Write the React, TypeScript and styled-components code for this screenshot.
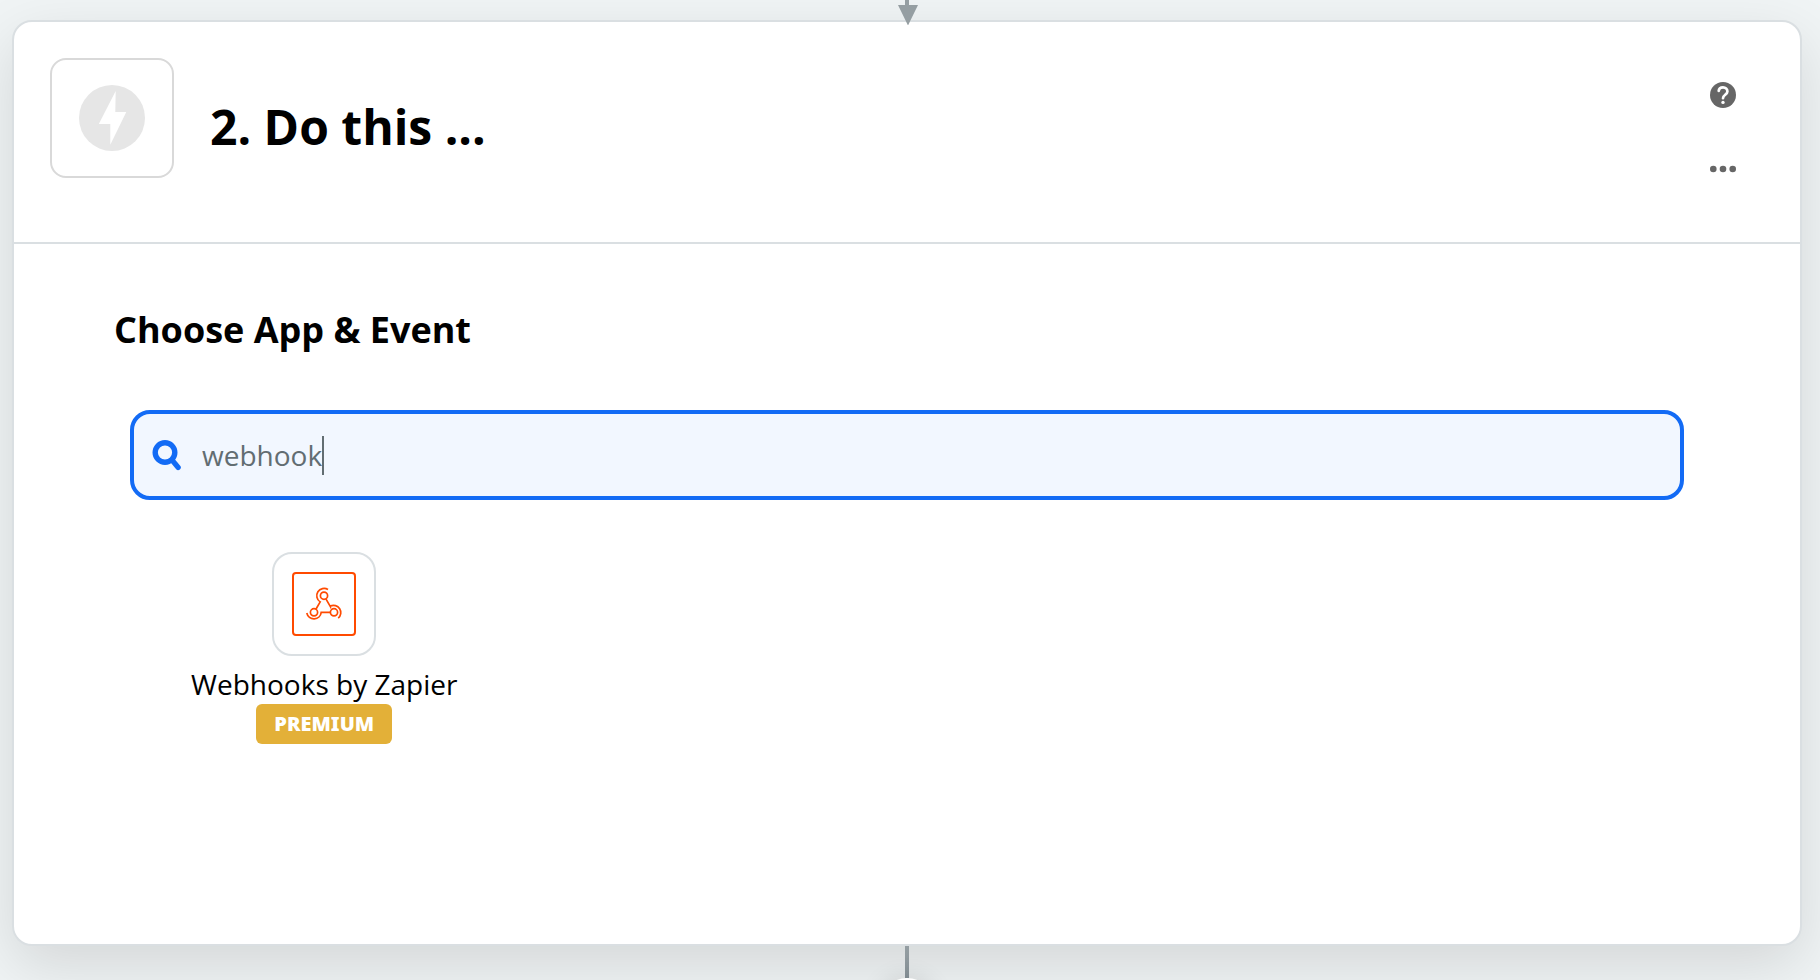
import React, { useState } from "react";
import styled, { createGlobalStyle } from "styled-components";

const GlobalStyle = createGlobalStyle`
  *, *::before, *::after { box-sizing: border-box; }
  body {
    margin: 0;
    background: #f0f4f5;
    color: #000;
    font-family: "Open Sans", "Noto Sans", sans-serif;
  }
`;

const Canvas = styled.main`
  display: flex;
  flex-direction: column;
  height: 100vh;
  overflow: hidden;
  padding: 0 18px 0 12px;
`;

const Connector = styled.div<{ $height: number; $above?: boolean }>`
  position: relative;
  z-index: ${(p) => (p.$above ? 1 : 0)};
  display: flex;
  flex: none;
  flex-direction: column;
  align-items: center;
  height: ${(p) => p.$height}px;
`;

const ArrowDown = styled.svg`
  display: block;
  flex: none;
  width: 22px;
  height: 25px;
`;

const Line = styled.div`
  flex: none;
  width: 4px;
  height: 32px;
  background: linear-gradient(#959ea2, #869197);
`;

const AddStep = styled.button`
  flex: none;
  width: 56px;
  height: 56px;
  padding: 0;
  border: 0;
  border-radius: 50%;
  background: #fff;
  box-shadow: 0 0 24px rgba(0, 0, 0, 0.12);
`;

const Card = styled.section`
  flex: none;
  border: 2px solid #dadfe2;
  border-radius: 20px;
  background: #fff;
  box-shadow: 0 20px 60px rgba(0, 0, 0, 0.12);
`;

const Header = styled.header`
  display: flex;
  align-items: flex-start;
  gap: 36px;
  min-height: 222px;
  padding: 36px 53px 36px 36px;
  border-bottom: 2px solid #dadfe2;
`;

const StepIcon = styled.div`
  display: flex;
  flex: none;
  align-items: center;
  justify-content: center;
  width: 124px;
  height: 120px;
  border: 2px solid #d9d9d9;
  border-radius: 16px;
`;

const Title = styled.h1`
  flex: 1;
  margin: 0;
  padding-top: 33px;
  font-size: 48px;
  font-weight: 700;
  line-height: 72px;
`;

const Actions = styled.div`
  display: flex;
  flex-direction: column;
  gap: 26px;
  padding-top: 13px;
`;

const IconButton = styled.button`
  display: flex;
  align-items: center;
  justify-content: center;
  width: 48px;
  height: 48px;
  padding: 0;
  border: 0;
  background: none;
  color: #666;
  cursor: pointer;
`;

const Body = styled.div`
  padding: 62px 100px 200px;
`;

const Heading = styled.h2`
  margin: 0 0 56px;
  font-size: 36px;
  font-weight: 700;
  line-height: 48px;
`;

const Picker = styled.div`
  padding: 0 16px;
`;

const SearchBox = styled.label`
  display: flex;
  align-items: center;
  height: 90px;
  padding: 0 16px;
  border: 4px solid #136bf5;
  border-radius: 20px;
  background: #f2f7ff;
  cursor: text;
`;

const SearchIcon = styled.svg`
  flex: none;
  width: 34px;
  height: 34px;
  margin-right: 18px;
`;

const SearchInput = styled.input`
  field-sizing: content;
  max-width: 100%;
  height: 40px;
  padding: 0;
  border: 0;
  outline: 0;
  background: none;
  color: #626d72;
  caret-color: transparent;
  font: 400 28px/40px "Open Sans", "Noto Sans", sans-serif;
`;

const Caret = styled.span`
  flex: none;
  width: 2px;
  height: 39px;
  background: #626d72;
`;

const AppGrid = styled.div`
  display: grid;
  grid-template-columns: repeat(4, 1fr);
  margin-top: 52px;
`;

const AppTile = styled.button`
  display: flex;
  flex-direction: column;
  align-items: center;
  padding: 0;
  border: 0;
  background: none;
  color: #000;
  font-family: inherit;
  cursor: pointer;
`;

const AppLogo = styled.span`
  display: flex;
  align-items: center;
  justify-content: center;
  width: 104px;
  height: 104px;
  border: 2px solid #dadfe2;
  border-radius: 20px;
`;

const AppName = styled.span`
  margin-top: 8px;
  font-size: 28px;
  line-height: 40px;
`;

const Badge = styled.span`
  padding: 0 18px;
  border-radius: 6px;
  background: #e3b038;
  color: #fff;
  font-family: "Noto Sans", "Open Sans", sans-serif;
  font-size: 20px;
  font-weight: 900;
  line-height: 40px;
`;

function BoltIcon() {
  return (
    <svg width="66" height="66" viewBox="-33 -33 66 66" aria-hidden="true">
      <circle r="33" fill="#e6e6e6" />
      <path d="M3.7-27 3.3-6H14.3L-1.7 26.8V6H-13.2Z" fill="#fff" />
    </svg>
  );
}

function HelpIcon() {
  return (
    <svg width="26" height="26" viewBox="-13 -13 26 26" aria-hidden="true">
      <circle r="13" fill="currentColor" />
      <path
        d="M-4.3-4.1C-4.1-6.3-2.2-7.7 0-7.7 2.5-7.7 4.4-6 4.4-3.6 4.4-.4 0-.1 0 3.2"
        fill="none"
        stroke="#fff"
        strokeWidth="2.7"
        strokeLinecap="round"
      />
      <circle cy="7.4" r="1.7" fill="#fff" />
    </svg>
  );
}

function MoreIcon() {
  return (
    <svg width="26" height="8" viewBox="-13 -4 26 8" fill="currentColor" aria-hidden="true">
      <circle cx="-9.7" r="3.3" />
      <circle r="3.3" />
      <circle cx="9.7" r="3.3" />
    </svg>
  );
}

function WebhookLogo() {
  return (
    <svg width="64" height="64" viewBox="0 0 64 64" fill="none" stroke="#ff4a00" aria-hidden="true">
      <rect x="1" y="1" width="62" height="62" rx="3" strokeWidth="2" />
      <g strokeWidth="1.7">
        <circle cx="32" cy="23.7" r="3.6" />
        <circle cx="22" cy="40.3" r="3.6" />
        <circle cx="42" cy="40.3" r="3.6" />
        <path d="M36 17.5A7.3 7.3 0 1 0 28.2 29.9L23.9 37.2" />
        <path d="M33.9 26.9 38.4 34.6 38.4 34A7.3 7.3 0 0 1 46.2 46.2" />
        <path d="M38.4 40.3H29.2A7.3 7.3 0 0 1 14.8 41" />
      </g>
    </svg>
  );
}

export default function App() {
  const [query, setQuery] = useState("webhook");

  return (
    <>
      <GlobalStyle />
      <Canvas>
        <Connector $height={20} $above>
          <ArrowDown viewBox="0 0 22 25" aria-hidden="true">
            <path d="M9 0H13V5H22L12 25.5 2 5H9Z" fill="#959ea2" />
          </ArrowDown>
        </Connector>
        <Card>
          <Header>
            <StepIcon>
              <BoltIcon />
            </StepIcon>
            <Title>2. Do this ...</Title>
            <Actions>
              <IconButton type="button" aria-label="Help">
                <HelpIcon />
              </IconButton>
              <IconButton type="button" aria-label="More options">
                <MoreIcon />
              </IconButton>
            </Actions>
          </Header>
          <Body>
            <Heading>Choose App &amp; Event</Heading>
            <Picker>
              <SearchBox>
                <SearchIcon viewBox="0 0 34 34" fill="none" stroke="#136bf5" aria-hidden="true">
                  <circle cx="15" cy="14.5" r="9.8" strokeWidth="5.4" />
                  <path d="M22 22 28.2 29.5" strokeWidth="5.2" strokeLinecap="round" />
                </SearchIcon>
                <SearchInput
                  type="text"
                  aria-label="Search apps"
                  value={query}
                  onChange={(e) => setQuery(e.target.value)}
                />
                <Caret />
              </SearchBox>
              <AppGrid>
                <AppTile type="button">
                  <AppLogo>
                    <WebhookLogo />
                  </AppLogo>
                  <AppName>Webhooks by Zapier</AppName>
                  <Badge>PREMIUM</Badge>
                </AppTile>
              </AppGrid>
            </Picker>
          </Body>
        </Card>
        <Connector $height={34}>
          <Line />
          <AddStep type="button" aria-label="Add step" />
        </Connector>
      </Canvas>
    </>
  );
}
